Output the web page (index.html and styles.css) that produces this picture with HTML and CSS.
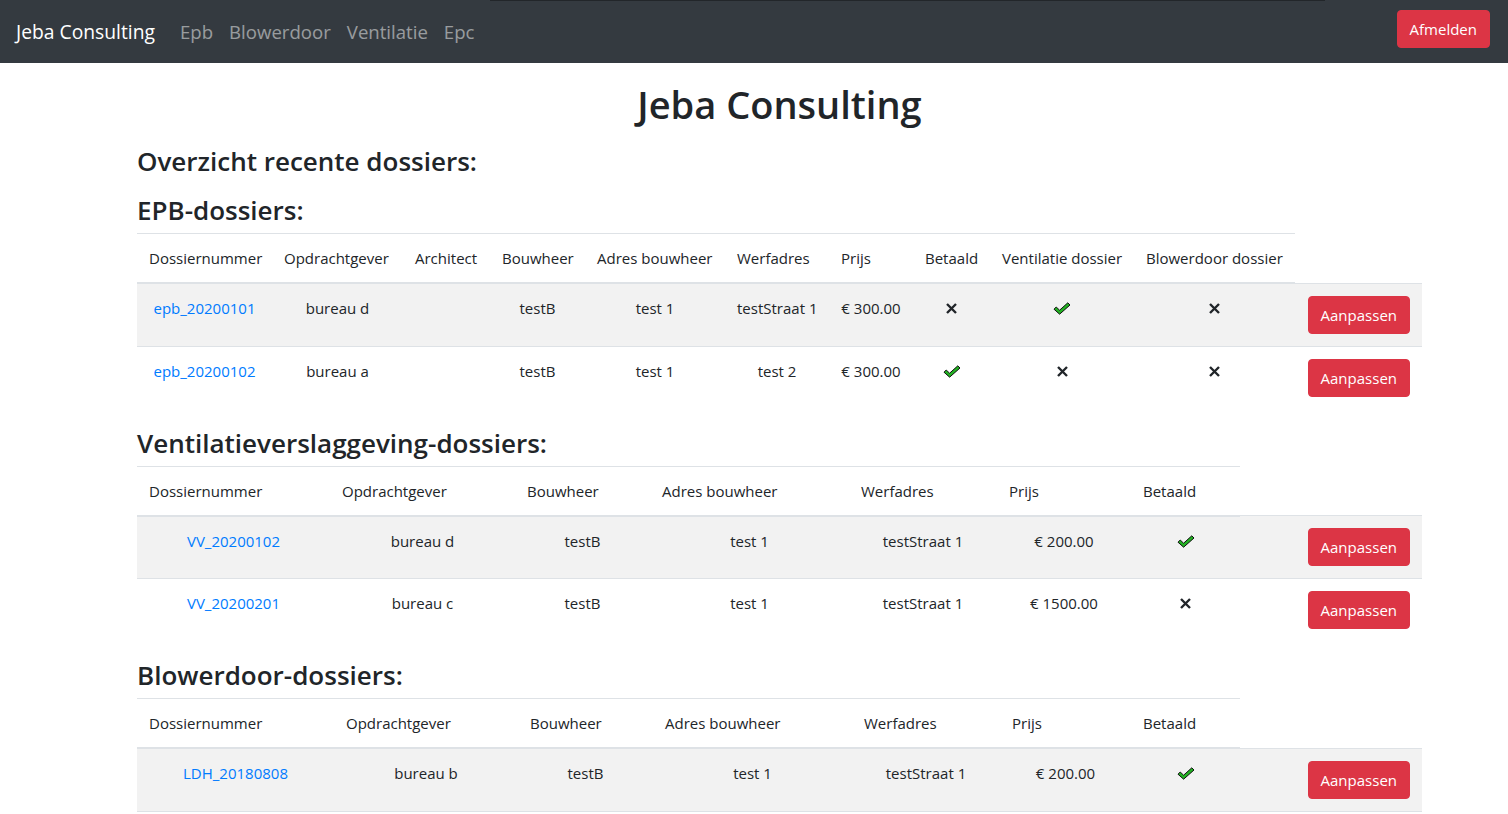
FILE: index.html
```html
<!DOCTYPE html>
<html lang="nl">
<head>
<meta charset="utf-8">
<title>Jeba Consulting</title>
<link rel="stylesheet" href="styles.css">
</head>
<body>
<nav class="navbar">
  <a class="brand" href="#">Jeba Consulting</a>
  <ul class="nav">
    <li><a href="#">Epb</a></li>
    <li><a href="#">Blowerdoor</a></li>
    <li><a href="#">Ventilatie</a></li>
    <li><a href="#">Epc</a></li>
  </ul>
  <button class="btn btn-danger logout">Afmelden</button>
</nav>

<main class="container">
  <h1 class="title">Jeba Consulting</h1>
  <h3 class="overview">Overzicht recente dossiers:</h3>

  <h3 class="section">EPB-dossiers:</h3>
  <table class="tbl">
    <colgroup>
      <col style="width:135px"><col style="width:131px"><col style="width:87px"><col style="width:95px"><col style="width:140px"><col style="width:104px"><col style="width:84px"><col style="width:77px"><col style="width:144px"><col style="width:161px"><col style="width:127px">
    </colgroup>
    <thead>
      <tr><th>Dossiernummer</th><th>Opdrachtgever</th><th>Architect</th><th>Bouwheer</th><th>Adres bouwheer</th><th>Werfadres</th><th>Prijs</th><th>Betaald</th><th>Ventilatie dossier</th><th>Blowerdoor dossier</th></tr>
    </thead>
    <tbody>
      <tr class="odd">
        <td><a href="#">epb_20200101</a></td><td>bureau d</td><td></td><td>testB</td><td>test 1</td><td>testStraat 1</td><td>€ 300.00</td>
        <td><span class="ic ic-x"><svg viewBox="0 0 11 11"><path d="M1 1L10 10M10 1L1 10"/></svg></span></td>
        <td><span class="ic ic-ok"><svg viewBox="0 0 18 13"><path d="M1 7.2L3.2 5L6.6 8.2L14.8 0.8L17 3L6.6 12.2Z"/></svg></span></td>
        <td><span class="ic ic-x"><svg viewBox="0 0 11 11"><path d="M1 1L10 10M10 1L1 10"/></svg></span></td>
        <td class="act"><button class="btn btn-danger">Aanpassen</button></td>
      </tr>
      <tr>
        <td><a href="#">epb_20200102</a></td><td>bureau a</td><td></td><td>testB</td><td>test 1</td><td>test 2</td><td>€ 300.00</td>
        <td><span class="ic ic-ok"><svg viewBox="0 0 18 13"><path d="M1 7.2L3.2 5L6.6 8.2L14.8 0.8L17 3L6.6 12.2Z"/></svg></span></td>
        <td><span class="ic ic-x"><svg viewBox="0 0 11 11"><path d="M1 1L10 10M10 1L1 10"/></svg></span></td>
        <td><span class="ic ic-x"><svg viewBox="0 0 11 11"><path d="M1 1L10 10M10 1L1 10"/></svg></span></td>
        <td class="act"><button class="btn btn-danger">Aanpassen</button></td>
      </tr>
    </tbody>
  </table>

  <h3 class="section">Ventilatieverslaggeving-dossiers:</h3>
  <table class="tbl">
    <colgroup>
      <col style="width:193px"><col style="width:185px"><col style="width:135px"><col style="width:199px"><col style="width:148px"><col style="width:134px"><col style="width:109px"><col style="width:182px">
    </colgroup>
    <thead>
      <tr><th>Dossiernummer</th><th>Opdrachtgever</th><th>Bouwheer</th><th>Adres bouwheer</th><th>Werfadres</th><th>Prijs</th><th>Betaald</th></tr>
    </thead>
    <tbody>
      <tr class="odd">
        <td><a href="#">VV_20200102</a></td><td>bureau d</td><td>testB</td><td>test 1</td><td>testStraat 1</td><td>€ 200.00</td>
        <td><span class="ic ic-ok"><svg viewBox="0 0 18 13"><path d="M1 7.2L3.2 5L6.6 8.2L14.8 0.8L17 3L6.6 12.2Z"/></svg></span></td>
        <td class="act"><button class="btn btn-danger">Aanpassen</button></td>
      </tr>
      <tr>
        <td><a href="#">VV_20200201</a></td><td>bureau c</td><td>testB</td><td>test 1</td><td>testStraat 1</td><td>€ 1500.00</td>
        <td><span class="ic ic-x"><svg viewBox="0 0 11 11"><path d="M1 1L10 10M10 1L1 10"/></svg></span></td>
        <td class="act"><button class="btn btn-danger">Aanpassen</button></td>
      </tr>
    </tbody>
  </table>

  <h3 class="section">Blowerdoor-dossiers:</h3>
  <table class="tbl">
    <colgroup>
      <col style="width:197px"><col style="width:184px"><col style="width:135px"><col style="width:199px"><col style="width:148px"><col style="width:131px"><col style="width:109px"><col style="width:182px">
    </colgroup>
    <thead>
      <tr><th>Dossiernummer</th><th>Opdrachtgever</th><th>Bouwheer</th><th>Adres bouwheer</th><th>Werfadres</th><th>Prijs</th><th>Betaald</th></tr>
    </thead>
    <tbody>
      <tr class="odd last">
        <td><a href="#">LDH_20180808</a></td><td>bureau b</td><td>testB</td><td>test 1</td><td>testStraat 1</td><td>€ 200.00</td>
        <td><span class="ic ic-ok"><svg viewBox="0 0 18 13"><path d="M1 7.2L3.2 5L6.6 8.2L14.8 0.8L17 3L6.6 12.2Z"/></svg></span></td>
        <td class="act"><button class="btn btn-danger">Aanpassen</button></td>
      </tr>
    </tbody>
  </table>
</main>
</body>
</html>
```

FILE: styles.css
```css
* { box-sizing: border-box; }

html, body {
  margin: 0;
  padding: 0;
}

body {
  font-family: "Open Sans", "Noto Sans", sans-serif;
  font-size: 15px;
  line-height: 24px;
  color: #212529;
  background: #fff;
}

a {
  color: #007bff;
  text-decoration: none;
}

/* ---------- navbar ---------- */
.navbar {
  position: relative;
  display: flex;
  align-items: center;
  height: 63px;
  padding: 0 18px 0 16px;
  background: #343a40;
}

.navbar::before {
  content: "";
  position: absolute;
  top: 0;
  left: 490px;
  width: 835px;
  height: 1px;
  background: #22262a;
}

.brand {
  font-size: 19.3px;
  line-height: 30px;
  color: #fff;
  margin-right: 17px;
}

.nav {
  display: flex;
  list-style: none;
  margin: 0;
  padding: 0;
}

.nav a {
  display: block;
  font-size: 18.6px;
  line-height: 30px;
  padding: 8px;
  color: rgba(255, 255, 255, 0.5);
}

.logout {
  margin-left: auto;
  align-self: flex-start;
  margin-top: 10px;
}

/* ---------- buttons ---------- */
.btn {
  display: inline-block;
  font-family: inherit;
  font-size: 15px;
  line-height: 24px;
  padding: 6px 12px;
  border: 1px solid transparent;
  border-radius: 4px;
  cursor: pointer;
}

.btn-danger {
  color: #fff;
  background: #dc3545;
  border-color: #dc3545;
}

/* ---------- content ---------- */
.container {
  width: 1285px;
  margin-left: 137px;
}

.title {
  margin: 17px 0 0;
  font-size: 38px;
  line-height: 48px;
  font-weight: 600;
  text-align: center;
}

.overview,
.section {
  font-size: 26px;
  line-height: 34px;
  font-weight: 600;
  margin: 0;
}

.overview {
  margin-top: 16px;
  margin-bottom: 15px;
}

.section {
  margin-bottom: 6px;
}

/* ---------- tables ---------- */
.tbl {
  width: 1285px;
  table-layout: fixed;
  border-collapse: collapse;
  margin-bottom: 17px;
}

.tbl th,
.tbl td {
  padding: 12px;
  vertical-align: top;
  border-top: 1px solid #dee2e6;
  white-space: nowrap;
}

.tbl th {
  font-weight: 400;
  text-align: left;
  border-bottom: 2px solid #dee2e6;
}

.tbl td {
  text-align: center;
}

.tbl td.act {
  text-align: right;
}

.tbl tr.odd td {
  background: #f2f2f2;
}

.tbl tr.last td {
  border-bottom: 1px solid #dee2e6;
}

.ic {
  display: inline-block;
  vertical-align: top;
}

.ic svg {
  display: block;
}

.ic-x {
  margin-top: 7px;
}

.ic-x svg {
  width: 11px;
  height: 11px;
  fill: none;
  stroke: #212529;
  stroke-width: 2.4;
}

.ic-ok {
  margin-top: 6px;
}

.ic-ok svg {
  width: 18px;
  height: 13px;
  fill: #22b122;
  stroke: #111;
  stroke-width: 1;
  stroke-linejoin: miter;
}
```
